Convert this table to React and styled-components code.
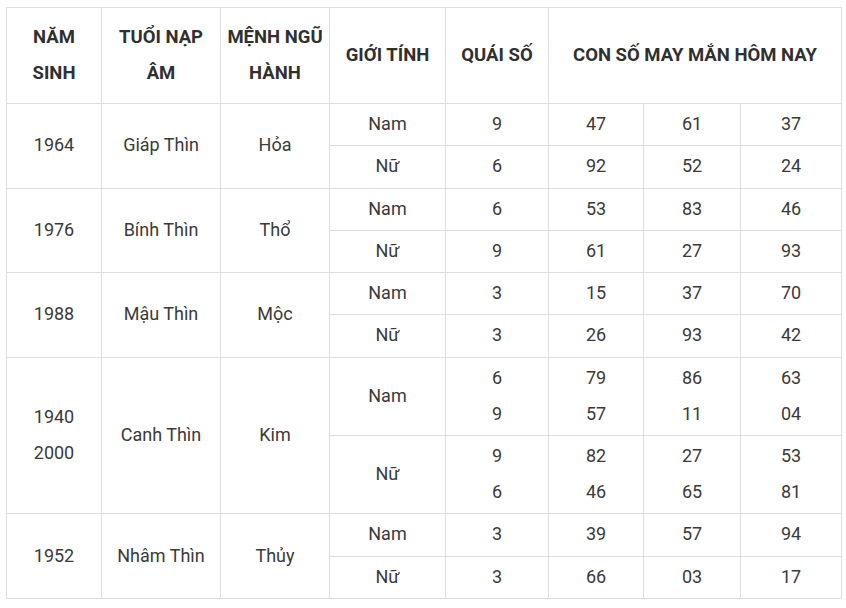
import styled, { createGlobalStyle } from "styled-components";

const GlobalStyle = createGlobalStyle`
  html, body {
    margin: 0;
    padding: 0;
    background: #ffffff;
  }
  body {
    font-family: Roboto, "Noto Sans", Arial, sans-serif;
  }
`;

const Page = styled.div`
  padding: 7px 5px 0 6px;
`;

const Table = styled.table`
  border-collapse: collapse;
  table-layout: fixed;
  width: 835px;
  color: #333333;
  font-size: 18px;
  line-height: 36px;
`;

const HeadCell = styled.th`
  border: 1px solid #dddddd;
  padding: 11px 4px 12px;
  font-size: 18.5px;
  font-weight: 700;
  color: #303030;
  text-align: center;
  vertical-align: middle;
`;

const Cell = styled.td`
  border: 1px solid #dddddd;
  padding: 2px 4px 3.3px;
  font-weight: 400;
  color: #3a3a3a;
  text-align: center;
  vertical-align: middle;
`;

const Line = styled.div``;

const widths = [95, 119, 109, 116, 103, 95, 97, 101];

const groups = [
  {
    years: ["1964"],
    name: "Giáp Thìn",
    element: "Hỏa",
    rows: [
      { gender: "Nam", kua: ["9"], nums: [["47"], ["61"], ["37"]] },
      { gender: "Nữ", kua: ["6"], nums: [["92"], ["52"], ["24"]] },
    ],
  },
  {
    years: ["1976"],
    name: "Bính Thìn",
    element: "Thổ",
    rows: [
      { gender: "Nam", kua: ["6"], nums: [["53"], ["83"], ["46"]] },
      { gender: "Nữ", kua: ["9"], nums: [["61"], ["27"], ["93"]] },
    ],
  },
  {
    years: ["1988"],
    name: "Mậu Thìn",
    element: "Mộc",
    rows: [
      { gender: "Nam", kua: ["3"], nums: [["15"], ["37"], ["70"]] },
      { gender: "Nữ", kua: ["3"], nums: [["26"], ["93"], ["42"]] },
    ],
  },
  {
    years: ["1940", "2000"],
    name: "Canh Thìn",
    element: "Kim",
    rows: [
      {
        gender: "Nam",
        kua: ["6", "9"],
        nums: [["79", "57"], ["86", "11"], ["63", "04"]],
      },
      {
        gender: "Nữ",
        kua: ["9", "6"],
        nums: [["82", "46"], ["27", "65"], ["53", "81"]],
      },
    ],
  },
  {
    years: ["1952"],
    name: "Nhâm Thìn",
    element: "Thủy",
    rows: [
      { gender: "Nam", kua: ["3"], nums: [["39"], ["57"], ["94"]] },
      { gender: "Nữ", kua: ["3"], nums: [["66"], ["03"], ["17"]] },
    ],
  },
];

const Lines = ({ items }) =>
  items.map((item, i) => <Line key={i}>{item}</Line>);

const App = () => {
  return (
    <Page>
      <GlobalStyle />
      <Table>
        <colgroup>
          {widths.map((w, i) => (
            <col key={i} style={{ width: w }} />
          ))}
        </colgroup>
        <thead>
          <tr>
            <HeadCell>
              NĂM
              <br />
              SINH
            </HeadCell>
            <HeadCell>
              TUỔI NẠP
              <br />
              ÂM
            </HeadCell>
            <HeadCell>
              MỆNH NGŨ
              <br />
              HÀNH
            </HeadCell>
            <HeadCell>GIỚI TÍNH</HeadCell>
            <HeadCell>QUÁI SỐ</HeadCell>
            <HeadCell colSpan={3}>CON SỐ MAY MẮN HÔM NAY</HeadCell>
          </tr>
        </thead>
        <tbody>
          {groups.map((g) =>
            g.rows.map((r, ri) => (
              <tr key={g.name + r.gender}>
                {ri === 0 && (
                  <>
                    <Cell rowSpan={2}>
                      <Lines items={g.years} />
                    </Cell>
                    <Cell rowSpan={2}>{g.name}</Cell>
                    <Cell rowSpan={2}>{g.element}</Cell>
                  </>
                )}
                <Cell>{r.gender}</Cell>
                <Cell>
                  <Lines items={r.kua} />
                </Cell>
                {r.nums.map((n, ni) => (
                  <Cell key={ni}>
                    <Lines items={n} />
                  </Cell>
                ))}
              </tr>
            ))
          )}
        </tbody>
      </Table>
    </Page>
  );
};

export default App;
